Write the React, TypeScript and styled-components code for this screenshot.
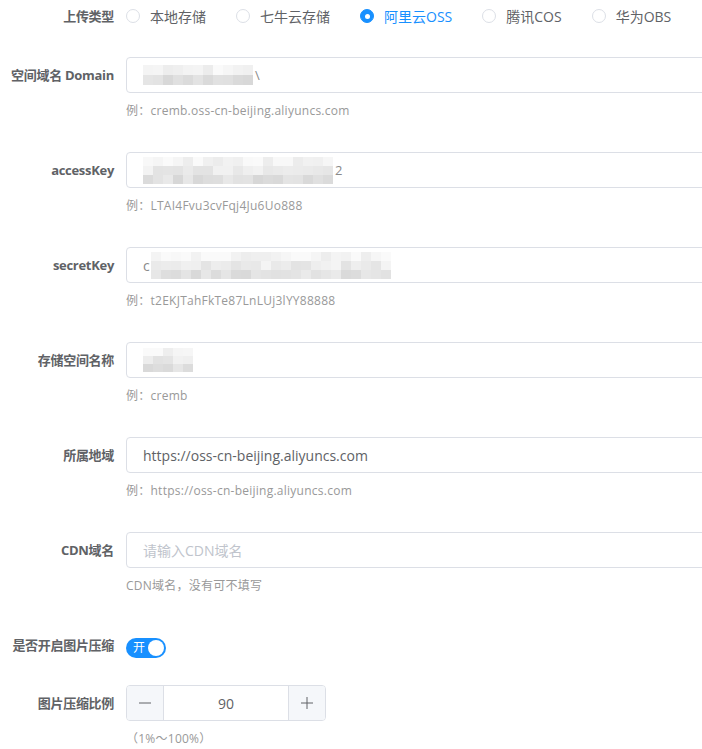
import React from "react";
import styled, { createGlobalStyle } from "styled-components";

const Global = createGlobalStyle`
  html, body { margin: 0; padding: 0; background: #fff; overflow: hidden; }
  body { font-family: "Open Sans", "Noto Sans CJK SC", sans-serif; font-size: 14px; color: #606266; }
`;

const FONT = `"Open Sans", "Noto Sans CJK SC", sans-serif`;
const BLUE = "#1890ff";

const Page = styled.div`
  width: 702px;
  overflow: hidden;
`;

const Form = styled.div`
  display: flex;
  flex-direction: column;
  width: 702px;
`;

const FormItem = styled.div<{ $mb: number }>`
  display: flex;
  align-items: flex-start;
  margin-bottom: ${(p) => p.$mb}px;
`;

const Label = styled.div<{ $lh?: number }>`
  width: 126px;
  flex: none;
  box-sizing: border-box;
  padding-right: 12px;
  text-align: right;
  font-family: ${FONT};
  font-size: 13px;
  font-weight: 700;
  color: #606266;
  line-height: ${(p) => p.$lh ?? 36}px;
  white-space: nowrap;
  letter-spacing: -0.3px;
`;

const Content = styled.div`
  display: flex;
  flex-direction: column;
  flex: none;
  width: 600px;
`;

const RadioGroup = styled.div`
  display: flex;
  align-items: center;
  height: 32px;
`;

const RadioItem = styled.label<{ $checked?: boolean }>`
  display: flex;
  align-items: center;
  margin-right: 30px;
  font-size: 14px;
  color: ${(p) => (p.$checked ? BLUE : "#606266")};
  white-space: nowrap;
`;

const RadioDot = styled.span<{ $checked?: boolean }>`
  box-sizing: border-box;
  width: 14px;
  height: 14px;
  border-radius: 50%;
  margin-right: 10px;
  border: 1px solid ${(p) => (p.$checked ? BLUE : "#dcdfe6")};
  background: ${(p) => (p.$checked ? BLUE : "#fff")};
  display: flex;
  align-items: center;
  justify-content: center;
  &::after {
    content: "";
    width: 5px;
    height: 5px;
    border-radius: 50%;
    background: #fff;
    display: ${(p) => (p.$checked ? "block" : "none")};
  }
`;

const InputShell = styled.div`
  box-sizing: border-box;
  height: 36px;
  border: 1px solid #dcdfe6;
  border-radius: 4px;
  padding: 0 15px 0 16px;
  display: flex;
  align-items: center;
  font-family: ${FONT};
  font-size: 14px;
  color: #606266;
  background: #fff;
  overflow: hidden;
`;

const Placeholder = styled.span`
  color: #c0c4cc;
`;

const Help = styled.div`
  margin-top: 8px;
  line-height: 20px;
  font-family: ${FONT};
  font-size: 12px;
  color: #999;
  letter-spacing: 0.25px;
`;

const MosaicGrid = styled.div<{ $cols: number; $cw: number; $ch: number }>`
  display: grid;
  grid-template-columns: repeat(${(p) => p.$cols}, ${(p) => p.$cw}px);
  grid-auto-rows: ${(p) => p.$ch}px;
  flex: none;
  filter: blur(0.6px);
`;

const Cell = styled.span``;

const Tail = styled.span`
  color: #8a8a8a;
  font-size: 13px;
  margin-left: 2px;
`;

const Lead = styled.span`
  color: #8a8a8a;
  margin-right: 1px;
`;

function Mosaic({ cols, rows, cw, ch, seed, base }: { cols: number; rows: number; cw: number; ch: number; seed: number; base: number }) {
  const cells: React.ReactNode[] = [];
  let s = seed;
  for (let r = 0; r < rows; r++) {
    for (let c = 0; c < cols; c++) {
      s = (s * 9301 + 49297) % 233280;
      const rnd = s / 233280;
      const rowBias = r === rows - 1 ? -10 : r === 0 ? 10 : 0;
      const v = Math.max(210, Math.min(250, Math.round(base + rowBias + rnd * 18 - 9)));
      cells.push(<Cell key={`${r}-${c}`} style={{ background: `rgb(${v},${v},${v})` }} />);
    }
  }
  return (
    <MosaicGrid $cols={cols} $cw={cw} $ch={ch}>
      {cells}
    </MosaicGrid>
  );
}

const Switch = styled.div`
  box-sizing: border-box;
  width: 40px;
  height: 20px;
  margin-top: 11px;
  border-radius: 10px;
  background: ${BLUE};
  display: flex;
  align-items: center;
  justify-content: space-between;
  padding: 0 2px 0 7px;
`;

const SwitchText = styled.span`
  color: #fff;
  font-size: 12px;
  line-height: 20px;
  font-family: ${FONT};
`;

const Knob = styled.span`
  width: 16px;
  height: 16px;
  border-radius: 50%;
  background: #fff;
`;

const NumberBox = styled.div`
  box-sizing: border-box;
  width: 200px;
  height: 36px;
  border: 1px solid #dcdfe6;
  border-radius: 4px;
  display: flex;
  overflow: hidden;
`;

const StepBtn = styled.div<{ $side: "left" | "right" }>`
  width: 36px;
  flex: none;
  background: #f5f7fa;
  display: flex;
  align-items: center;
  justify-content: center;
  border-${(p) => (p.$side === "left" ? "right" : "left")}: 1px solid #dcdfe6;
  color: #606266;
`;

const NumberValue = styled.div`
  flex: 1;
  display: flex;
  align-items: center;
  justify-content: center;
  font-family: ${FONT};
  font-size: 14px;
  color: #606266;
`;

const Minus = () => (
  <svg width="14" height="14" viewBox="0 0 14 14">
    <path d="M1 7h12" stroke="#606266" strokeWidth="1" />
  </svg>
);
const Plus = () => (
  <svg width="14" height="14" viewBox="0 0 14 14">
    <path d="M1 7h12M7 1v12" stroke="#606266" strokeWidth="1" />
  </svg>
);

const radios = ["本地存储", "七牛云存储", "阿里云OSS", "腾讯COS", "华为OBS"];

export default function App() {
  return (
    <Page>
      <Global />
      <Form>
        <FormItem $mb={25}>
          <Label $lh={32}>上传类型</Label>
          <RadioGroup>
            {radios.map((r, i) => (
              <RadioItem key={r} $checked={i === 2}>
                <RadioDot $checked={i === 2} />
                {r}
              </RadioItem>
            ))}
          </RadioGroup>
        </FormItem>

        <FormItem $mb={31}>
          <Label>空间域名 Domain</Label>
          <Content>
            <InputShell>
              <Mosaic cols={11} rows={2} cw={10} ch={10} seed={7} base={234} />
              <Tail>\</Tail>
            </InputShell>
            <Help>例：cremb.oss-cn-beijing.aliyuncs.com</Help>
          </Content>
        </FormItem>

        <FormItem $mb={31}>
          <Label>accessKey</Label>
          <Content>
            <InputShell>
              <Mosaic cols={19} rows={3} cw={10} ch={9} seed={13} base={234} />
              <Tail>2</Tail>
            </InputShell>
            <Help>例：LTAI4Fvu3cvFqj4Ju6Uo888</Help>
          </Content>
        </FormItem>

        <FormItem $mb={31}>
          <Label>secretKey</Label>
          <Content>
            <InputShell>
              <Lead>c</Lead>
              <Mosaic cols={24} rows={3} cw={10} ch={9} seed={29} base={236} />
            </InputShell>
            <Help>例：t2EKJTahFkTe87LnLUj3lYY88888</Help>
          </Content>
        </FormItem>

        <FormItem $mb={31}>
          <Label>存储空间名称</Label>
          <Content>
            <InputShell>
              <Mosaic cols={5} rows={3} cw={10} ch={8} seed={41} base={234} />
            </InputShell>
            <Help>例：cremb</Help>
          </Content>
        </FormItem>

        <FormItem $mb={31}>
          <Label>所属地域</Label>
          <Content>
            <InputShell>https://oss-cn-beijing.aliyuncs.com</InputShell>
            <Help>例：https://oss-cn-beijing.aliyuncs.com</Help>
          </Content>
        </FormItem>

        <FormItem $mb={31}>
          <Label>CDN域名</Label>
          <Content>
            <InputShell>
              <Placeholder>请输入CDN域名</Placeholder>
            </InputShell>
            <Help>CDN域名，没有可不填写</Help>
          </Content>
        </FormItem>

        <FormItem $mb={22}>
          <Label>是否开启图片压缩</Label>
          <Content>
            <Switch>
              <SwitchText>开</SwitchText>
              <Knob />
            </Switch>
          </Content>
        </FormItem>

        <FormItem $mb={0}>
          <Label>图片压缩比例</Label>
          <Content>
            <NumberBox>
              <StepBtn $side="left">
                <Minus />
              </StepBtn>
              <NumberValue>90</NumberValue>
              <StepBtn $side="right">
                <Plus />
              </StepBtn>
            </NumberBox>
            <Help>（1%～100%）</Help>
          </Content>
        </FormItem>
      </Form>
    </Page>
  );
}
